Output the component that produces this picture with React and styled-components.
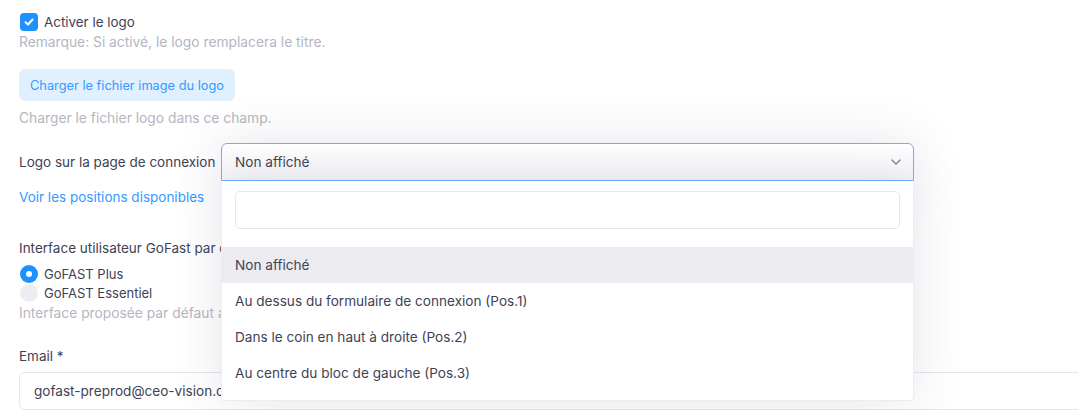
import React from "react";
import styled, { createGlobalStyle } from "styled-components";

const GlobalStyle = createGlobalStyle`
  html, body {
    margin: 0;
    padding: 0;
    background: #ffffff;
    overflow: hidden;
  }
  body {
    font-family: "Inter", "Open Sans", sans-serif;
    color: #3f4254;
  }
`;

const Page = styled.div`
  width: 1110px;
  padding: 12px 0 0 19px;
  display: flex;
  flex-direction: column;
`;

const CheckRow = styled.label`
  display: flex;
  align-items: center;
  gap: 6px;
  height: 19px;
  font-size: 13.4px;
  padding-left: 1px;
`;

const CheckBox = styled.span`
  width: 18px;
  height: 18px;
  border-radius: 4px;
  background: #1b92ff;
  display: flex;
  align-items: center;
  justify-content: center;
`;

const Help = styled.div`
  font-size: 13.8px;
  line-height: 20px;
  color: #b5b5c3;
  margin-top: ${(p) => p.$mt || 0}px;
`;

const LightButton = styled.button`
  align-self: flex-start;
  margin-top: 17px;
  height: 32px;
  width: 216px;
  padding: 0;
  border: none;
  border-radius: 6px;
  background: #e1f0ff;
  color: #3699ff;
  font-family: inherit;
  font-size: 12.8px;
`;

const SelectRow = styled.div`
  margin-top: 15px;
  display: grid;
  grid-template-columns: 198px 693px;
  align-items: center;
  column-gap: 4px;
`;

const Label = styled.div`
  font-size: 13.5px;
  line-height: 20px;
  color: #3f4254;
  white-space: nowrap;
  margin-top: ${(p) => p.$mt || 0}px;
`;

const SelectWrap = styled.div`
  position: relative;
  box-shadow: 0 0 50px 0 rgba(82, 63, 105, 0.15);
  border-radius: 6px 6px 0 0;
`;

const SelectBox = styled.div`
  height: 38px;
  box-sizing: border-box;
  border: 1px solid #69b3ff;
  border-radius: 6px 6px 0 0;
  background: linear-gradient(180deg, #ffffff 0%, #f5f5f8 100%);
  display: flex;
  align-items: center;
  justify-content: space-between;
  padding: 0 12px 0 13px;
  font-size: 13.6px;
`;

const Dropdown = styled.div`
  position: absolute;
  left: 0;
  top: 38px;
  width: 100%;
  box-sizing: border-box;
  background: #ffffff;
  border: 1px solid #ebedf3;
  border-top: none;
  border-radius: 0 0 4px 4px;
  padding: 10px 0 9px;
  box-shadow: 0 0 50px 0 rgba(82, 63, 105, 0.15);
  z-index: 2;
`;

const Search = styled.input`
  display: block;
  box-sizing: border-box;
  margin: 0 13px 18px 13px;
  width: calc(100% - 26px);
  height: 38px;
  border: 1px solid #e4e6ef;
  border-radius: 5px;
  outline: none;
`;

const Option = styled.div`
  height: 36px;
  display: flex;
  align-items: center;
  padding-left: 13px;
  font-size: 13.6px;
  background: ${(p) => (p.$active ? "#ebebf0" : "transparent")};
`;

const Link = styled.a`
  font-size: 13.5px;
  line-height: 20px;
  color: #3699ff;
  margin-top: 6px;
`;

const RadioRow = styled.label`
  display: flex;
  align-items: center;
  gap: 6px;
  height: 19px;
  font-size: 13px;
  padding-left: 1px;
  margin-top: ${(p) => p.$mt || 0}px;
`;

const Radio = styled.span`
  width: 18px;
  height: 18px;
  border-radius: 50%;
  box-sizing: border-box;
  background: ${(p) => (p.$checked ? "#1b92ff" : "#ebedf3")};
  display: flex;
  align-items: center;
  justify-content: center;
  &::after {
    content: "";
    width: 6px;
    height: 6px;
    border-radius: 50%;
    background: ${(p) => (p.$checked ? "#ffffff" : "transparent")};
  }
`;

const TextInput = styled.input`
  margin-top: 6px;
  height: 38px;
  box-sizing: border-box;
  width: 1080px;
  border: 1px solid #e4e6ef;
  border-radius: 6px;
  padding: 0 14px;
  font-family: inherit;
  font-size: 13.6px;
  color: #3f4254;
  outline: none;
`;

const Check = () => (
  <svg width="12" height="12" viewBox="0 0 12 12" fill="none">
    <path d="M2.5 6.2 L5 8.5 L9.5 3.5" stroke="#fff" strokeWidth="2" strokeLinecap="round" strokeLinejoin="round" />
  </svg>
);

const Chevron = () => (
  <svg width="10" height="6" viewBox="0 0 10 6" fill="none">
    <path d="M1 1 L5 5 L9 1" stroke="#7e8299" strokeWidth="1.3" strokeLinecap="round" strokeLinejoin="round" />
  </svg>
);

const options = [
  "Non affiché",
  "Au dessus du formulaire de connexion (Pos.1)",
  "Dans le coin en haut à droite (Pos.2)",
  "Au centre du bloc de gauche (Pos.3)",
];

export default function App() {
  return (
    <>
      <GlobalStyle />
      <Page>
        <CheckRow>
          <CheckBox>
            <Check />
          </CheckBox>
          Activer le logo
        </CheckRow>
        <Help $mt={1}>Remarque: Si activé, le logo remplacera le titre.</Help>
        <LightButton>Charger le fichier image du logo</LightButton>
        <Help $mt={7}>Charger le fichier logo dans ce champ.</Help>

        <SelectRow>
          <Label>Logo sur la page de connexion</Label>
          <SelectWrap>
            <SelectBox>
              Non affiché
              <Chevron />
            </SelectBox>
            <Dropdown>
              <Search />
              {options.map((o, i) => (
                <Option key={o} $active={i === 0}>
                  {o}
                </Option>
              ))}
            </Dropdown>
          </SelectWrap>
        </SelectRow>
        <Link>Voir les positions disponibles</Link>

        <Label $mt={31}>Interface utilisateur GoFast par défaut</Label>
        <RadioRow $mt={6}>
          <Radio $checked />
          GoFAST Plus
        </RadioRow>
        <RadioRow>
          <Radio />
          GoFAST Essentiel
        </RadioRow>
        <Help $mt={1}>Interface proposée par défaut aux utilisateurs</Help>

        <Label $mt={23}>Email *</Label>
        <TextInput defaultValue="gofast-preprod@ceo-vision.com" />
      </Page>
    </>
  );
}
